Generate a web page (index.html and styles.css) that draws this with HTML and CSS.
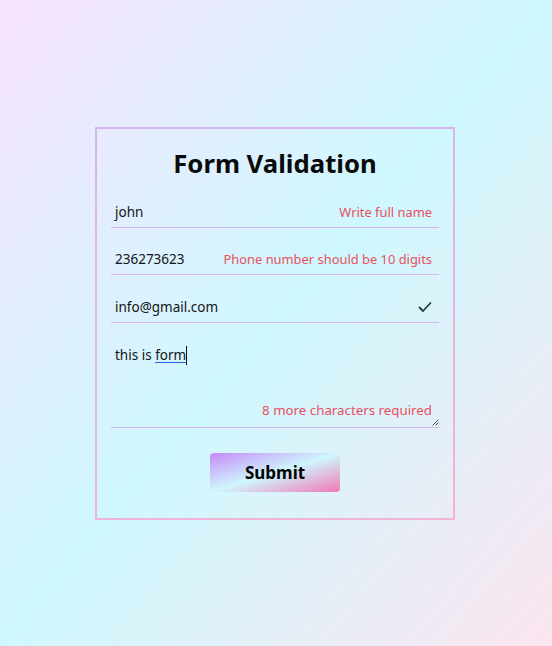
FILE: index.html
```html
<!DOCTYPE html>
<html lang="en">
<head>
<meta charset="utf-8">
<title>Form Validation</title>
<link rel="stylesheet" href="styles.css">
</head>
<body>
<main class="page">
  <form class="card">
    <h1 class="title">Form Validation</h1>
    <div class="field">
      <span class="value">john</span>
      <span class="error">Write full name</span>
    </div>
    <div class="field">
      <span class="value">236273623</span>
      <span class="error">Phone number should be 10 digits</span>
    </div>
    <div class="field field-email">
      <span class="value">info@gmail.com</span>
      <svg class="check" width="14" height="12" viewBox="0 0 14 12" aria-hidden="true">
        <path d="M1.5 6.5 L5 10 L12.5 2" fill="none" stroke="#1b4636" stroke-width="1.8" stroke-linecap="round" stroke-linejoin="round"/>
      </svg>
    </div>
    <div class="field field-area">
      <span class="value">this is <span class="compose">form</span><span class="caret"></span></span>
      <span class="error">8 more characters required</span>
      <svg class="grip" width="8" height="8" viewBox="0 0 8 8" aria-hidden="true">
        <path d="M7.5 1.5 L1.5 7.5 M7.5 4.5 L4.5 7.5" stroke="#555" stroke-width="1"/>
      </svg>
    </div>
    <button type="button" class="submit">Submit</button>
  </form>
</main>
</body>
</html>
```

FILE: styles.css
```css
* { box-sizing: border-box; }
html, body { margin: 0; height: 100%; }
body {
  font-family: "Noto Sans", "Open Sans", sans-serif;
  background: linear-gradient(to bottom right, #f8e3fe 0%, #cff8fe 50%, #fbe5f0 100%);
  color: #111;
}
.page {
  min-height: 100%;
  display: flex;
  align-items: center;
  justify-content: center;
  padding: 1px 2px 0 0;
}
.card {
  width: 360px;
  border: 2px solid;
  border-image: linear-gradient(to bottom, #d5b6ee, #f0b4d8) 1;
  padding: 18px 14px 26px;
  display: flex;
  flex-direction: column;
  gap: 16px;
}
.title {
  margin: 0;
  text-align: center;
  font-size: 25.7px;
  line-height: 34px;
  font-weight: 700;
  color: #0a0a0a;
}
.field {
  height: 31px;
  display: flex;
  align-items: center;
  justify-content: space-between;
  padding: 0 7px 0 4px;
  border-bottom: 1px solid #d9b5f1;
  font-size: 13.5px;
}
.field-email { margin-top: 1px; }
.value { color: #151515; }
.error { color: #e8505e; font-size: 12.9px; }
.check { margin-right: 0; margin-top: -1px; }
.field-area {
  height: 89px;
  position: relative;
  flex-direction: column;
  align-items: stretch;
  justify-content: space-between;
  padding: 6px 7px 9px 4px;
  line-height: 20px;
}
.field-area .error { align-self: flex-end; line-height: 16px; font-size: 13.3px; }
.compose {
  text-decoration: underline;
  text-decoration-color: #2b5fe0;
  text-underline-offset: 2px;
}
.caret {
  display: inline-block;
  width: 1px;
  height: 19px;
  background: #111;
  vertical-align: -5px;
}
.grip {
  position: absolute;
  right: 0;
  bottom: 1px;
}
.submit {
  align-self: center;
  width: 130px;
  height: 39px;
  margin-top: 9px;
  border: none;
  border-radius: 4px;
  background: linear-gradient(to bottom right, #c48af9 0%, #cff6fd 50%, #f277b6 100%);
  font-family: inherit;
  font-size: 17px;
  font-weight: 700;
  color: #000;
}
```
